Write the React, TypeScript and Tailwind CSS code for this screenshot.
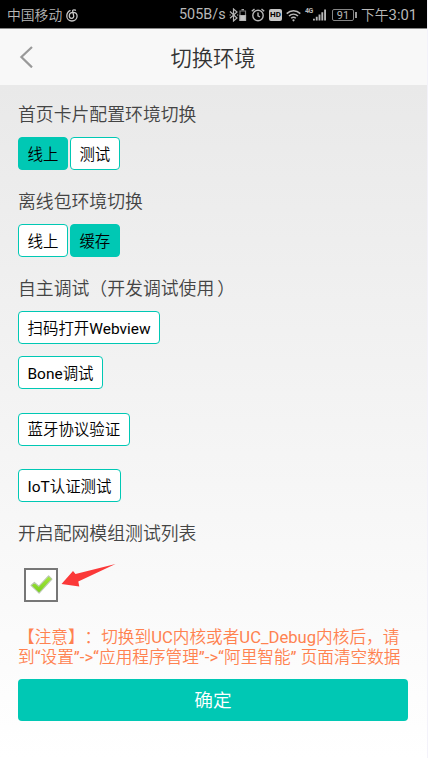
import type { ReactNode } from "react";

function StatusBar() {
  return (
    <div className="flex h-7 items-center justify-between bg-black pr-[11px] pl-[7px] text-[13.8px] leading-7 whitespace-nowrap text-[#b8b8b8]">
      <div className="flex items-center pt-[2px]">
        <span className="font-[350]">中国移动</span>
        <svg className="ml-[4px] block" width="12" height="13" viewBox="0 0 12 13" fill="none" stroke="#c8c8c8" strokeWidth="1.3" strokeLinecap="round">
          <path d="M4 1.6C2 2.6.8 4.7.8 7c0 2.8 2.2 5 5.1 5s5.2-2.1 5.2-4.9c0-2.3-1.6-3.8-3.9-3.8-2.3 0-3.9 1.4-3.9 3.4 0 1.5 1 2.6 2.3 2.6 1.6 0 2.4-1.4 2-2.9L6.7 2.3c-.3-1.2.9-1.9 2.7-1.1" />
        </svg>
      </div>
      <div className="flex items-center pt-[2px]">
        <span className="w-[46px] text-[14.4px]">505B/s</span>
        <svg className="ml-[4px] block" width="18" height="14" viewBox="0 0 18 14" fill="none" stroke="#b4b4b4" strokeWidth="1.2">
          <path d="M1 3.5l7 6.5-3.5 3V1L8 4 1 10.3" />
          <path d="M.5 7h1.2M8 7h1.2" />
          <path d="M11 3h5.5v9.5H11z" stroke="#777" />
          <path d="M12.5 1.7h2.5" />
          <path d="M11 7.5h5.5v5H11z" fill="#c8c8c8" />
        </svg>
        <svg className="ml-[4px] block" width="14" height="14" viewBox="0 0 14 14" fill="none" stroke="#b8b8b8" strokeWidth="1.4">
          <circle cx="7" cy="7.5" r="5.2" />
          <path d="M7 4.5v3.3l2 1.2M.8 3.3L3.5 1M13.2 3.3L10.5 1" />
        </svg>
        <span className="ml-[4px] flex h-3 w-[13px] items-center justify-center rounded-[2px] bg-[#c6c6c6] text-[8px] leading-none font-bold text-black">HD</span>
        <svg className="ml-[4px] block" width="15" height="13" viewBox="0 0 15 13" fill="none" stroke="#b8b8b8" strokeWidth="1.5">
          <path d="M.7 4.6c4-3.8 9.6-3.8 13.6 0M3 7c2.6-2.5 6.4-2.5 9 0M5.2 9.3c1.4-1.3 3.2-1.3 4.6 0" />
          <circle cx="7.5" cy="11.3" r="1.1" fill="#b8b8b8" stroke="none" />
        </svg>
        <div className="ml-[4px] flex items-start">
          <span className="-mt-px h-[13px] w-[8px] text-[7px] leading-[7px] font-bold tracking-[-0.5px]">4G</span>
          <svg className="block" width="13" height="12" viewBox="0 0 14 12" fill="#b8b8b8">
            <path d="M0 10h2v2H0zM3 8h2v4H3zM6 5.5h2V12H6zM9 3h2v9H9zM12 0h2v12h-2z" />
          </svg>
        </div>
        <div className="ml-[6px] flex items-center">
          <span className="flex h-3 w-[22px] items-center justify-center rounded-[2px] border border-[#858585] text-[11px] leading-none">91</span>
          <span className="ml-px h-[6px] w-[1.5px] bg-[#999999]" />
        </div>
        <span className="ml-[4.5px] w-[55px] font-[350]">
          下午<span className="text-[14.8px] font-normal">3:01</span>
        </span>
      </div>
    </div>
  );
}

function Header() {
  return (
    <header className="flex h-[57px] items-center border-t border-[#888888] bg-[#f8f8f8]">
      <svg className="ml-[19px] block" width="14" height="22" viewBox="0 0 14 22" fill="none" stroke="#999999" strokeWidth="2.2">
        <path d="M13 1L2.4 11 13 21.4" />
      </svg>
      <h1 className="mr-[34px] flex-1 pt-[4px] text-center text-[21.3px] leading-7 font-[350] text-[#333333]">切换环境</h1>
    </header>
  );
}

function Heading({ children }: { children: ReactNode }) {
  return <h2 className="text-[17.85px] leading-6 font-[350] whitespace-nowrap text-[#444444]">{children}</h2>;
}

function Latin({ children }: { children: ReactNode }) {
  return <span className="font-normal">{children}</span>;
}

function Chip({ children, active = false }: { children: ReactNode; active?: boolean }) {
  return (
    <button
      className={`flex h-[33px] items-center rounded-[4px] border border-[#00c8b4] px-[8.5px] pt-[4px] text-[15.45px] leading-none font-[350] whitespace-nowrap text-black ${active ? "bg-[#00c8b4]" : "bg-white"}`}
    >
      <span>{children}</span>
    </button>
  );
}

function CheckedBox() {
  return (
    <div className="flex h-[34px] w-[34px] items-center justify-center border-2 border-[#777777] bg-white">
      <svg className="ml-px" width="23" height="19" viewBox="0 0 24 20">
        <defs>
          <linearGradient id="tick" x1="0" y1="0" x2="0" y2="1">
            <stop offset="0" stopColor="#a6e83c" />
            <stop offset="1" stopColor="#78d01c" />
          </linearGradient>
        </defs>
        <path d="M1 11L4.5 7.8l4.7 4L19.5 1 23 4.3 9.5 19z" fill="url(#tick)" stroke="#b9c8ac" strokeWidth="1.2" strokeLinejoin="round" />
      </svg>
    </div>
  );
}

export default function App() {
  return (
    <div className="h-[758px] w-[428px] overflow-hidden border-r border-[#f3f2fa] bg-white font-['Roboto','Noto_Sans_CJK_SC',sans-serif] [text-spacing-trim:space-all]">
      <StatusBar />
      <Header />
      <main className="flex h-[673px] flex-col items-start bg-linear-to-b from-[#e9e9e9] to-white pr-[19px] pl-[18px]">
        <div className="mt-[18px]"><Heading>首页卡片配置环境切换</Heading></div>
        <div className="mt-[10px] flex gap-[2px]">
          <Chip active>线上</Chip>
          <Chip>测试</Chip>
        </div>
        <div className="mt-[20px]"><Heading>离线包环境切换</Heading></div>
        <div className="mt-[10px] flex gap-[2px]">
          <Chip>线上</Chip>
          <Chip active>缓存</Chip>
        </div>
        <div className="mt-[20px]">
          <Heading>
            自主调试（开发调试使用<span className="ml-[3px]">）</span>
          </Heading>
        </div>
        <div className="mt-[10px]"><Chip>扫码打开<Latin>Webview</Latin></Chip></div>
        <div className="mt-[12px]"><Chip><Latin>Bone</Latin>调试</Chip></div>
        <div className="mt-[23.5px]"><Chip>蓝牙协议验证</Chip></div>
        <div className="mt-[23.5px]"><Chip><Latin>IoT</Latin>认证测试</Chip></div>
        <div className="mt-[20px]"><Heading>开启配网模组测试列表</Heading></div>
        <div className="mt-[19px] ml-[6px] flex h-[39px] items-center">
          <CheckedBox />
          <svg className="mb-[19px] ml-[3px] block" width="56" height="24" viewBox="0 0 56 24" fill="#fb3838">
            <path d="M.5 21L12 8l2.5 3L54.5 1 17.3 18.5l1 5z" />
          </svg>
        </div>
        <p className="mt-[23.5px] text-[16.65px] leading-[20px] font-[350] whitespace-nowrap text-[#ff8250]">
          【注意】：切换到<Latin>UC</Latin>内核或者<Latin>UC_Debug</Latin>内核后，请
          <br />
          到<Latin>“</Latin>设置<Latin>”-&gt;“</Latin>应用程序管理<Latin>”-&gt;“</Latin>阿里智能<Latin>” </Latin>页面清空数据
        </p>
        <button className="mt-[11px] flex h-[42px] w-full items-center justify-center rounded-[4px] bg-[#00c8b4] pt-[4px] text-[18.7px] leading-none font-[350] text-white">
          确定
        </button>
      </main>
    </div>
  );
}
